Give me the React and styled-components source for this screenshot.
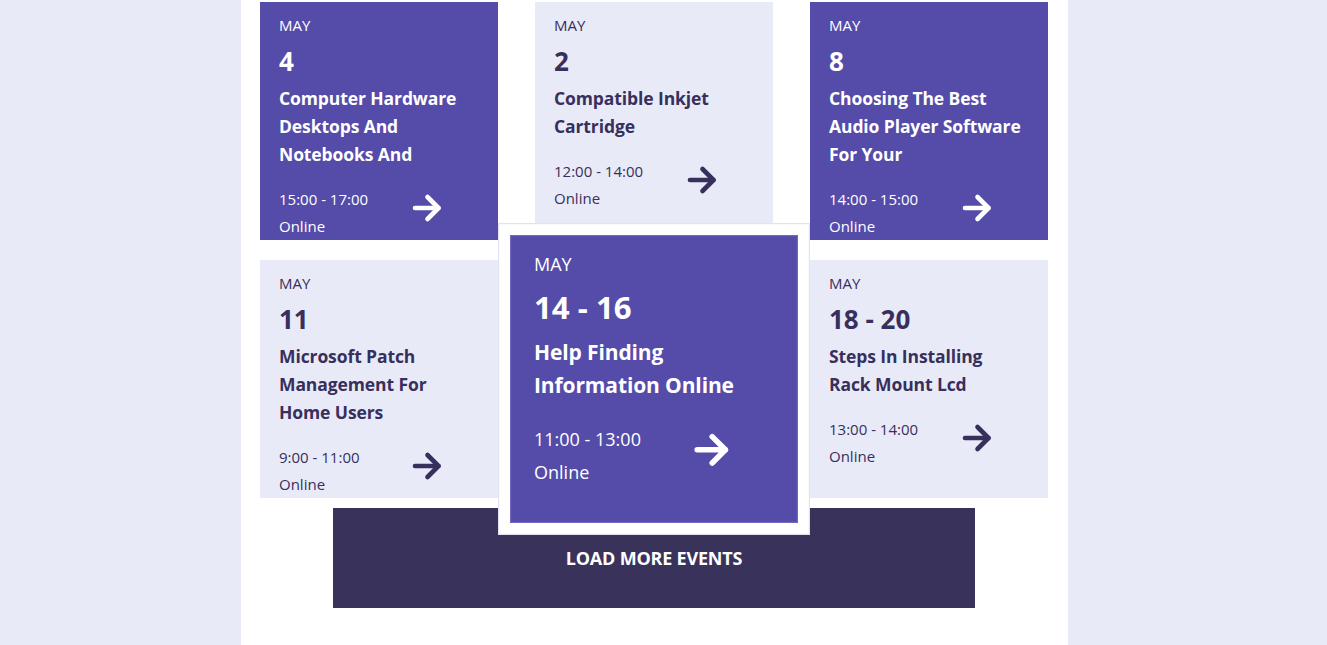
import React from 'react'
import styled, { createGlobalStyle, css } from 'styled-components'

const GlobalStyle = createGlobalStyle`
    html, body {
        margin: 0;
        padding: 0;
        background: #e9eaf8;
        font-family: "Open Sans", "Noto Sans", sans-serif;
    }
`

const Page = styled.div`
    min-height: 645px;
    overflow: hidden;
`

const Column = styled.main`
    width: 827px;
    min-height: 645px;
    margin-left: 241px;
    background: #ffffff;
    padding: 2px 19px 0;
    box-sizing: border-box;
`

const Grid = styled.div`
    display: grid;
    grid-template-columns: 238px 238px 238px;
    column-gap: 37px;
    row-gap: 20px;
`

const Card = styled.div`
    position: relative;
    width: 238px;
    height: 238px;
    box-sizing: border-box;
    padding: 11px 25px 0 19px;
    overflow: hidden;
    background: ${p => (p.$dark ? '#554ba9' : '#e9eaf8')};
    color: ${p => (p.$dark ? '#ffffff' : '#372f5c')};
    ${p => p.$active && css`
        overflow: visible;
        z-index: 2;
        transform: scale(1.2);
        box-shadow: 0 0 0 1px #6f67bf, 0 0 0 10px #ffffff, 0 0 0 11px #e2e2f1;
    `}
`

const Month = styled.div`
    font-size: 15px;
    line-height: 24px;
`

const Day = styled.div`
    margin-top: 6px;
    font-size: 26px;
    font-weight: 700;
    line-height: 36px;
`

const Title = styled.h3`
    margin: 5px 0 0;
    font-size: 17.5px;
    font-weight: 700;
    line-height: 28px;
    letter-spacing: -0.1px;
`

const Footer = styled.div`
    display: flex;
    align-items: center;
    margin-top: 18px;
`

const Info = styled.div`
    width: 133px;
    flex-shrink: 0;
    font-size: 15px;
    line-height: 27px;
`

const Arrow = styled.svg`
    width: 30px;
    height: 30px;
    flex-shrink: 0;
    margin-top: -10px;
    color: ${p => (p.$dark ? '#ffffff' : '#372f5c')};
`

const LoadMore = styled.button`
    display: block;
    width: 642px;
    height: 100px;
    margin: 10px 0 0 73px;
    border: none;
    background: #39325b;
    color: #ffffff;
    font-family: "Open Sans", "Noto Sans", sans-serif;
    font-size: 18px;
    font-weight: 700;
    letter-spacing: -0.2px;
    cursor: pointer;
`

const events = [
    { day: '4', title: 'Computer Hardware Desktops And Notebooks And', time: '15:00 - 17:00', dark: true },
    { day: '2', title: 'Compatible Inkjet Cartridge', time: '12:00 - 14:00' },
    { day: '8', title: 'Choosing The Best Audio Player Software For Your', time: '14:00 - 15:00', dark: true },
    { day: '11', title: 'Microsoft Patch Management For Home Users', time: '9:00 - 11:00' },
    { day: '14 - 16', title: 'Help Finding Information Online', time: '11:00 - 13:00', dark: true, active: true },
    { day: '18 - 20', title: 'Steps In Installing Rack Mount Lcd', time: '13:00 - 14:00' },
]

const ArrowIcon = ({ dark }) => (
    <Arrow $dark={dark} viewBox="0 0 30 30" fill="none" stroke="currentColor"
        strokeWidth="4.6" strokeLinecap="round" strokeLinejoin="round">
        <path d="M3 15H26.5" />
        <path d="M15.5 4L26.5 15L15.5 26" />
    </Arrow>
)

const App = () => {
    return (
        <Page>
            <GlobalStyle />
            <Column>
                <Grid>
                    {events.map((e, i) => (
                        <Card key={i} $dark={e.dark} $active={e.active}>
                            <Month>MAY</Month>
                            <Day>{e.day}</Day>
                            <Title>{e.title}</Title>
                            <Footer>
                                <Info>
                                    <div>{e.time}</div>
                                    <div>Online</div>
                                </Info>
                                <ArrowIcon dark={e.dark} />
                            </Footer>
                        </Card>
                    ))}
                </Grid>
                <LoadMore>LOAD MORE EVENTS</LoadMore>
            </Column>
        </Page>
    )
}

export default App
